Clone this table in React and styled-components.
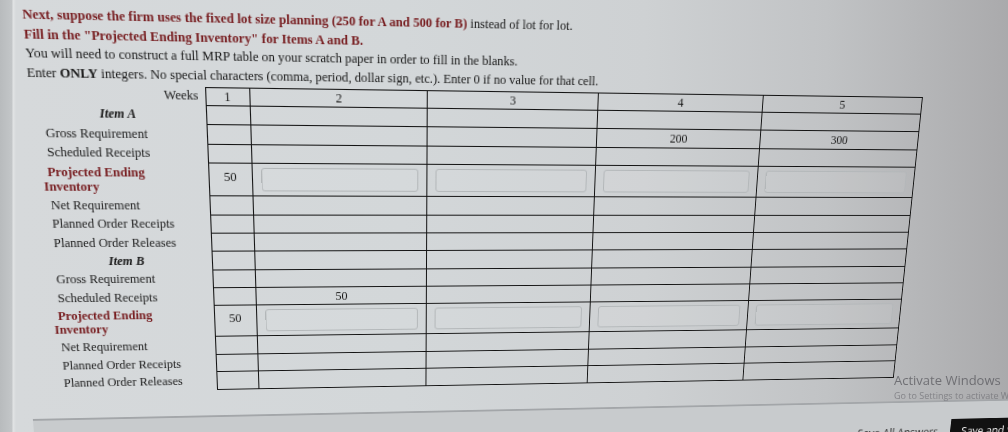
import React from "react";
import styled, { createGlobalStyle } from "styled-components";

// the reference is a photo of a monitor taken at an angle, so the flat page is
// mapped onto the photographed table corners with a projective matrix
const FLAT = { x: 205, y: 87, w: 717, h: 302 };
const QUAD = [
  [205, 87],
  [922, 97],
  [893, 377],
  [217, 389],
];

function quadMatrix(r, q) {
  const [[x0, y0], [x1, y1], [x2, y2], [x3, y3]] = q;
  const dx1 = x1 - x2, dx2 = x3 - x2, dx3 = x0 - x1 + x2 - x3;
  const dy1 = y1 - y2, dy2 = y3 - y2, dy3 = y0 - y1 + y2 - y3;
  const den = dx1 * dy2 - dx2 * dy1;
  const g = (dx3 * dy2 - dx2 * dy3) / den;
  const h = (dx1 * dy3 - dx3 * dy1) / den;
  const a = x1 - x0 + g * x1, b = x3 - x0 + h * x3, c = x0;
  const d = y1 - y0 + g * y1, e = y3 - y0 + h * y3, f = y0;
  const m11 = a / r.w, m12 = b / r.h, m13 = c - (a * r.x) / r.w - (b * r.y) / r.h;
  const m21 = d / r.w, m22 = e / r.h, m23 = f - (d * r.x) / r.w - (e * r.y) / r.h;
  const m31 = g / r.w, m32 = h / r.h, m33 = 1 - (g * r.x) / r.w - (h * r.y) / r.h;
  const m = [m11, m21, 0, m31, m12, m22, 0, m32, 0, 0, 1, 0, m13, m23, 0, m33];
  return `matrix3d(${m.map((v) => +(v / m33).toFixed(8)).join(",")})`;
}

const SCREEN = quadMatrix(FLAT, QUAD);

const rowsA = [
  { label: "Gross Requirement", values: ["", "", "", "200", "300"] },
  { label: "Scheduled Receipts", values: ["", "", "", "", ""] },
  { label: "pei", values: ["50"] },
  { label: "Net Requirement", values: ["", "", "", "", ""] },
  { label: "Planned Order Receipts", values: ["", "", "", "", ""] },
  { label: "Planned Order Releases", values: ["", "", "", "", ""] },
];

const rowsB = [
  { label: "Gross Requirement", values: ["", "", "", "", ""] },
  { label: "Scheduled Receipts", values: ["", "50", "", "", ""] },
  { label: "pei", values: ["50"] },
  { label: "Net Requirement", values: ["", "", "", "", ""] },
  { label: "Planned Order Receipts", values: ["", "", "", "", ""] },
  { label: "Planned Order Releases", values: ["", "", "", "", ""] },
];

function ItemRows({ name, rows }) {
  return (
    <>
      <Row>
        <ItemLabel>Item {name}</ItemLabel>
        {[1, 2, 3, 4, 5].map((w) => (
          <Cell key={w} />
        ))}
      </Row>
      {rows.map((row, i) =>
        row.label === "pei" ? (
          <Row key={i} $tall>
            <Label>
              <Pei>
                <span>Projected Ending</span>
                <br />
                Inventory
              </Pei>
            </Label>
            <Cell $top>{row.values[0]}</Cell>
            {[2, 3, 4, 5].map((w) => (
              <Cell key={w}>
                <Entry type="text" aria-label={`Item ${name} week ${w}`} />
              </Cell>
            ))}
          </Row>
        ) : (
          <Row key={i}>
            <Label>{row.label}</Label>
            {row.values.map((v, j) => (
              <Cell key={j}>{v}</Cell>
            ))}
          </Row>
        )
      )}
    </>
  );
}

export default function App() {
  return (
    <>
      <GlobalStyle />
      <Page>
        <Line>
          <Red>
            Next, suppose the firm uses the fixed lot size planning (250 for A and 500 for B)
          </Red>{" "}
          instead of lot for lot.
        </Line>
        <Line>
          <Red>Fill in the "Projected Ending Inventory" for Items A and B.</Red>
        </Line>
        <Line>
          You will need to construct a full MRP table on your scratch paper in order to fill in
          the blanks.
        </Line>
        <Line>
          Enter <b>ONLY</b> integers. No special characters (comma, period, dollar sign, etc.).
          Enter 0 if no value for that cell.
        </Line>

        <Table>
          <colgroup>
            <col style={{ width: 161 }} />
            <col style={{ width: 41 }} />
            <col style={{ width: 169 }} />
            <col style={{ width: 169 }} />
            <col style={{ width: 169 }} />
            <col style={{ width: 169 }} />
          </colgroup>
          <tbody>
            <Row $head>
              <WeeksLabel>Weeks</WeeksLabel>
              {[1, 2, 3, 4, 5].map((w) => (
                <Cell key={w}>{w}</Cell>
              ))}
            </Row>
            <ItemRows name="A" rows={rowsA} />
            <ItemRows name="B" rows={rowsB} />
          </tbody>
        </Table>

        <Footer>
          <SaveAll>Save All Answers</SaveAll>
          <Submit>Save and Submit</Submit>
        </Footer>
      </Page>

      <Watermark>
        <WatermarkTitle>Activate Windows</WatermarkTitle>
        <WatermarkSub>Go to Settings to activate Windows.</WatermarkSub>
      </Watermark>
    </>
  );
}

const GlobalStyle = createGlobalStyle`
  html, body {
    margin: 0;
    height: 100%;
    overflow: hidden;
  }
  body {
    background: linear-gradient(
      90deg,
      #b8bbbd 0,
      #c3c6c8 12px,
      #e2e4e5 13px,
      #d6d9db 16px,
      #d3d7d9 40%,
      #ced1d3 64%,
      #c1c3c5 82%,
      #aaaaac 100%
    );
    font-family: "Liberation Serif", "Times New Roman", serif;
    color: #171717;
  }
`;

const Page = styled.div`
  width: 1150px;
  padding: 15px 0 0 44px;
  box-sizing: border-box;
  transform-origin: 0 0;
  transform: ${SCREEN};
  font-size: 12px;
`;

const Line = styled.div`
  font-size: 12.2px;
  line-height: 17.6px;
  white-space: nowrap;
`;

const Red = styled.b`
  color: #761b1e;
`;

const Table = styled.table`
  margin-top: 1.6px;
  border-collapse: collapse;
  table-layout: fixed;
  width: 838px;
`;

const Row = styled.tr`
  height: ${(p) => (p.$head ? 17 : p.$tall ? 32 : 18.4)}px;
`;

const Label = styled.td`
  padding: 0 0 0 13px;
  line-height: 14px;
  white-space: nowrap;
  color: #1a1a1a;
`;

const WeeksLabel = styled.td`
  padding: 0 6px 0 0;
  text-align: right;
`;

const ItemLabel = styled.td`
  padding: 0 0 0 63px;
  font-weight: bold;
  font-style: italic;
`;

const Pei = styled.span`
  display: inline-block;
  margin-left: -5px;
  font-weight: bold;
  color: #761b1e;

  > span {
    margin-left: 4px;
  }
`;

const Cell = styled.td`
  border: 1px solid #121212;
  padding: 0 0 ${(p) => (p.$top ? 5 : 0)}px;
  text-align: center;
  vertical-align: middle;
  line-height: 14px;
`;

const Entry = styled.input`
  display: block;
  box-sizing: border-box;
  width: calc(100% - 16px);
  height: 23px;
  margin: 0 auto;
  border: 1px solid #b3b7b9;
  border-radius: 3px;
  background: rgba(255, 255, 255, 0.06);
  outline: none;
`;

const Footer = styled.div`
  display: flex;
  justify-content: flex-end;
  align-items: center;
  gap: 14px;
  margin: 27px 0 0 -19px;
  height: 70px;
  padding: 0 35px 16px 0;
  background: #c8cbcd;
  border-top: 2px solid #a3a6a9;
`;

const SaveAll = styled.span`
  font-family: "Open Sans", "Liberation Sans", sans-serif;
  font-size: 12px;
  color: #2a2a2a;
`;

const Submit = styled.button`
  width: 120px;
  height: 30px;
  border: none;
  background: #111;
  color: #f2f2f2;
  font-family: "Open Sans", "Liberation Sans", sans-serif;
  font-size: 12px;
`;

const Watermark = styled.div`
  position: fixed;
  left: 894px;
  top: 372px;
  white-space: nowrap;
  font-family: "Open Sans", "Liberation Sans", sans-serif;
`;

const WatermarkTitle = styled.div`
  font-size: 13px;
  line-height: 17px;
  color: rgba(88, 88, 94, 0.75);
`;

const WatermarkSub = styled.div`
  font-size: 9px;
  line-height: 13px;
  color: rgba(110, 110, 116, 0.7);
`;
